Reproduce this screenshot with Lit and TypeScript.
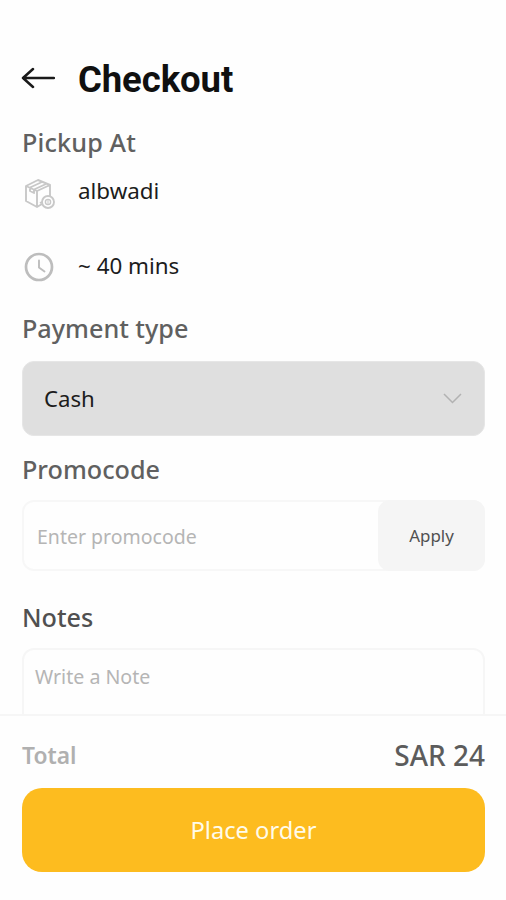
import { LitElement, html, css } from "lit";
import { customElement } from "lit/decorators.js";

@customElement("app-root")
export class AppRoot extends LitElement {
  static styles = css`
    :host {
      display: flex;
      flex-direction: column;
      height: 900px;
      background: #fefefe;
      font-family: "Noto Sans", "Open Sans", sans-serif;
      color: #1c1c1c;
      overflow: hidden;
    }
    * {
      box-sizing: border-box;
    }
    svg {
      display: block;
      flex: none;
      fill: none;
    }
    main {
      height: 714px;
      padding: 0 21px 0 22px;
      overflow: hidden;
    }
    header {
      display: flex;
      align-items: flex-start;
      gap: 22px;
      padding-top: 58px;
      height: 101px;
    }
    header svg {
      margin-top: 9px;
      margin-left: -1px;
      margin-right: 1px;
    }
    h1 {
      margin: 0;
      font: 700 36.5px/44px Roboto, sans-serif;
      letter-spacing: -0.1px;
      color: #101010;
    }
    h2 {
      margin: 0;
      font-size: 25.2px;
      line-height: 32px;
      font-weight: 500;
      color: #606060;
      white-space: nowrap;
    }
    .pickup {
      margin-top: 25px;
      letter-spacing: 0.15px;
    }
    .row {
      display: flex;
      gap: 22px;
      font-size: 22.4px;
      line-height: 32px;
      margin-top: 17px;
    }
    .row + .row {
      margin-top: 39px;
    }
    .row svg {
      margin-top: 2px;
    }
    .payment {
      margin-top: 30px;
    }
    .select {
      display: flex;
      align-items: center;
      justify-content: space-between;
      height: 75px;
      margin-top: 17px;
      padding: 0 22px 0 21px;
      border-radius: 12px;
      background: #dfdfdf;
      border: 1px solid #e6e6e6;
      font-size: 22.2px;
      line-height: 30px;
    }
    .select span {
      padding-top: 1px;
    }
    .promo-title {
      margin-top: 17px;
    }
    .promo {
      display: flex;
      height: 71px;
      margin-top: 15px;
      border: 2px solid #f7f7f7;
      border-radius: 12px;
    }
    .hint {
      flex: 1;
      padding-left: 13px;
      font-size: 19.5px;
      line-height: 70px;
      color: #b5b5b5;
      white-space: nowrap;
    }
    .apply {
      width: 107px;
      height: 71px;
      margin: -2px -2px 0 0;
      border-radius: 12px;
      background: #f5f5f5;
      color: #505050;
      font-size: 16.9px;
      line-height: 72px;
      text-align: center;
    }
    .notes-title {
      margin-top: 30px;
      color: #505050;
    }
    .note {
      height: 120px;
      margin-top: 15px;
      padding: 12px 11px;
      border: 2px solid #f6f6f6;
      border-radius: 12px;
      font-size: 19.6px;
      line-height: 30px;
      color: #b5b5b5;
    }
    footer {
      flex: 1;
      border-top: 2px solid #f6f6f6;
      padding: 19px 21px 0 22px;
    }
    .total {
      display: flex;
      justify-content: space-between;
      align-items: center;
      height: 40px;
      color: #b0b0b0;
      font-size: 22.8px;
      font-weight: 600;
    }
    .amount {
      color: #5c5c5c;
      font-size: 28px;
      font-weight: 500;
    }
    .order {
      height: 84px;
      margin-top: 13px;
      border-radius: 20px;
      background: #fdbc1f;
      color: #fffbea;
      font-size: 23.7px;
      line-height: 84px;
      text-align: center;
    }
  `;

  render() {
    return html`
      <main>
        <header>
          <svg width="34" height="22" viewBox="0 0 34 22" stroke="#1a1a1a" stroke-width="2.5" stroke-linecap="round" stroke-linejoin="round">
            <path d="M33 11H2M12 2L2 11L12 20" />
          </svg>
          <h1>Checkout</h1>
        </header>
        <h2 class="pickup">Pickup At</h2>
        <div class="row">
          <svg width="34" height="34" viewBox="0 0 34 34" stroke="#c8c8c8" stroke-width="1.9" stroke-linejoin="round">
            <path d="M20 27L15 30L4 24V9L16 3L28 8V19M4 9L15 14L28 8M15 14V30M8 10.5L20 5M12 12.5L24 7M8 10.5V14L12 16V12.5M18 26L20 25" />
            <circle cx="26" cy="25" r="6" fill="#fefefe" />
            <circle cx="26" cy="25" r="2.6" stroke-width="1.4" />
            <path d="M26 22V28" stroke-width="1" />
          </svg>
          <span>albwadi</span>
        </div>
        <div class="row">
          <svg width="34" height="30" viewBox="0 0 34 30" stroke="#bdbdbd" stroke-width="2.7">
            <circle cx="17" cy="15" r="13" />
            <path d="M17 8.5V15.5L22.5 19.5" stroke-width="1.9" stroke-linecap="round" />
          </svg>
          <span>~ 40 mins</span>
        </div>
        <h2 class="payment">Payment type</h2>
        <div class="select">
          <span>Cash</span>
          <svg width="19" height="11" viewBox="0 0 19 11" stroke="#b2b2b2" stroke-width="1.5">
            <path d="M1 1L9.5 9.5L18 1" />
          </svg>
        </div>
        <h2 class="promo-title">Promocode</h2>
        <div class="promo">
          <span class="hint">Enter promocode</span>
          <span class="apply">Apply</span>
        </div>
        <h2 class="notes-title">Notes</h2>
        <div class="note">Write a Note</div>
      </main>
      <footer>
        <div class="total">
          <span>Total</span>
          <span class="amount">SAR 24</span>
        </div>
        <div class="order">Place order</div>
      </footer>
    `;
  }
}
